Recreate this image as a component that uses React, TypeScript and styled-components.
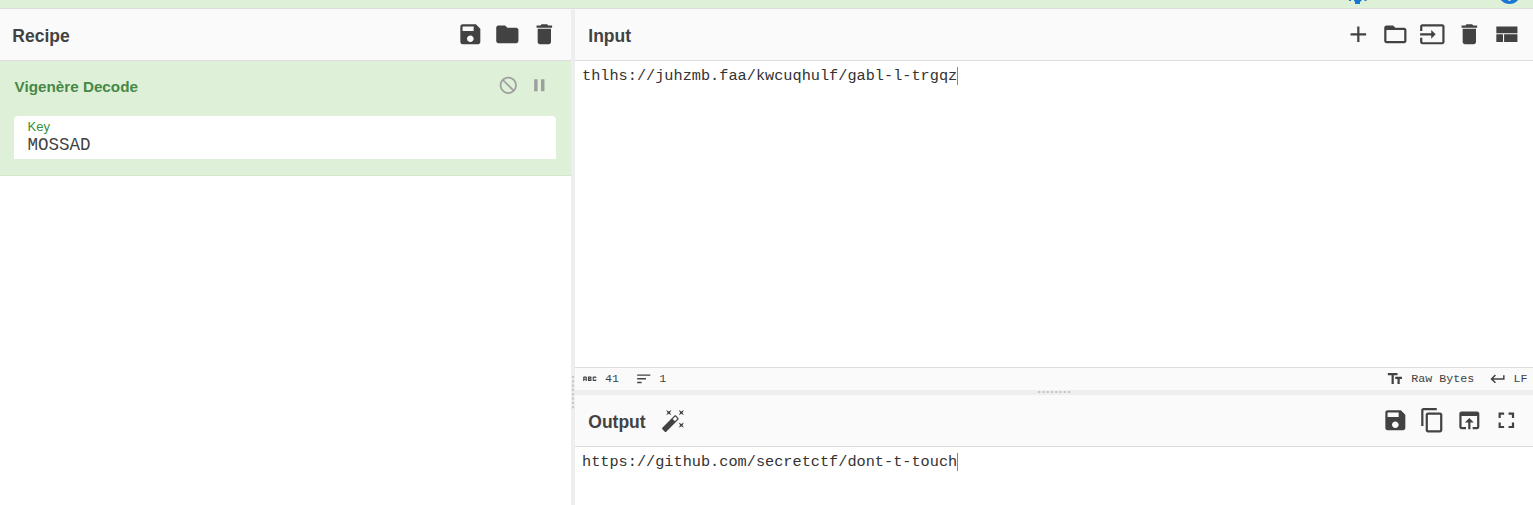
import React from "react";
import styled, { createGlobalStyle } from "styled-components";

const Global = createGlobalStyle`
  * { box-sizing: border-box; }
  html, body, #root { height: 100%; }
  body { margin: 0; overflow: hidden; background: #fff; color: #424242; font-family: "Liberation Sans", Arial, sans-serif; }
`;

const mono = `"Liberation Mono", "Courier New", monospace`;

const Page = styled.div`display: flex; flex-direction: column; height: 505px; overflow: hidden;`;
const Banner = styled.header`
  flex: none; height: 9px; padding: 0 10.5px 0 0; overflow: hidden;
  display: flex; justify-content: flex-end; gap: 124.5px;
  background: #dff0d8; border-bottom: 1px solid #dddddd;
`;
const BannerIcon = styled.svg`display: block; flex: none; width: 27px; height: 8px;`;
const Workspace = styled.main`flex: 1; display: flex; min-height: 0;`;
const RecipePane = styled.section`width: 571px; flex: none; display: flex; flex-direction: column;`;
const IoPane = styled.section`flex: 1; min-width: 0; display: flex; flex-direction: column;`;
const ColumnGutter = styled.div`
  width: 4px; flex: none; background: #eeeeee;
  display: flex; flex-direction: column; align-items: center; padding-top: 367px;
`;
const RowGutter = styled.div`
  height: 5px; flex: none; background: #eeeeee;
  display: flex; justify-content: center; align-items: flex-start; padding-top: 1px;
`;
const Grip = styled.svg`display: block; flex: none;`;
const TitleBar = styled.div`
  height: 52px; flex: none; display: flex; align-items: center;
  padding: 0 13px; background: #fafafa; border-bottom: 1px solid #dddddd;
`;
const RecipeTitleBar = styled(TitleBar)`padding: 0 13px 0 12px;`;
const Title = styled.h1`margin: 0; padding: 2px 0 0 0.3px; font-size: 17.5px; line-height: 22px; font-weight: 700;`;
const Tools = styled.div`margin-left: auto; display: flex; gap: 10.5px; padding-bottom: 1px;`;
const Wand = styled.div`margin-left: 15px; padding-bottom: 1px;`;
const Glyph = styled.svg<{ $size: number }>`
  display: block; flex: none; fill: currentColor;
  width: ${(p) => p.$size}px; height: ${(p) => p.$size}px;
`;
const Operation = styled.article`
  height: 115px; flex: none; padding: 14px 15px 0 14px;
  background: #dff0d8; border-bottom: 1px solid #d3e8c6; color: #468847;
`;
const OperationHead = styled.div`display: flex; align-items: center; height: 24px;`;
const OperationName = styled.h2`margin: 0; padding-left: 0.5px; font-size: 15.25px; font-weight: 700; line-height: 24px;`;
const OperationTools = styled.div`
  margin-left: auto; padding: 0 6.4px 3px 0; display: flex; gap: 10.2px; color: #9e9e9e;
`;
const Field = styled.label`
  display: block; margin-top: 17px; height: 43px; padding: 4px 13.5px 0;
  background: #fff; border-radius: 4px 4px 0 0;
`;
const FieldLabel = styled.span`display: block; font-size: 13px; line-height: 14px; color: #388e3c;`;
const FieldValue = styled.span`display: block; font: 17.5px/20px ${mono}; color: #424242; padding-top: 1px;`;
const Editor = styled.div<{ $height?: number }>`
  ${(p) => (p.$height ? `height: ${p.$height}px; flex: none;` : "flex: 1;")}
  display: flex; align-items: flex-start; padding: 6px 7px;
  font: 15.25px/18px ${mono}; color: #333;
`;
const Caret = styled.span`width: 1px; height: 18px; background: #888;`;
const StatusBar = styled.div`
  height: 23px; flex: none; display: flex; align-items: center; padding: 0 5.5px 0 6px;
  background: #fafafa; border-top: 1px solid #dddddd; font: 11.65px/20px ${mono};
`;
const Stat = styled.span<{ $gap?: number; $after?: number }>`
  display: flex; align-items: center; gap: ${(p) => p.$gap ?? 6}px; margin-right: ${(p) => p.$after ?? 0}px;
`;
const Spacer = styled.span`flex: 1;`;

const icons = {
  save: "M17 3H5c-1.11 0-2 .9-2 2v14c0 1.1.89 2 2 2h14c1.1 0 2-.9 2-2V7l-4-4zm-5 16c-1.66 0-3-1.34-3-3s1.34-3 3-3 3 1.34 3 3-1.34 3-3 3zm3-10H5V5h10v4z",
  folder: "M10 4H4c-1.1 0-1.99.9-1.99 2L2 18c0 1.1.9 2 2 2h16c1.1 0 2-.9 2-2V8c0-1.1-.9-2-2-2h-8l-2-2z",
  trash: "M6 19c0 1.1.9 2 2 2h8c1.1 0 2-.9 2-2V7H6v12zM19 4h-3.5l-1-1h-5l-1 1H5v2h14V4z",
  add: "M19 13h-6v6h-2v-6H5v-2h6V5h2v6h6v2z",
  folderOpen: "M20 6h-8l-2-2H4c-1.1 0-1.99.9-1.99 2L2 18c0 1.1.9 2 2 2h16c1.1 0 2-.9 2-2V8c0-1.1-.9-2-2-2zm0 12H4V8h16v10z",
  input: "M21 3.01H3c-1.1 0-2 .9-2 2V9h2V4.99h18v14.03H3V15H1v4.01c0 1.1.9 1.98 2 1.98h18c1.1 0 2-.88 2-1.98v-14c0-1.11-.9-2-2-2zM11 16l4-4-4-4v3H1v2h10v3z",
  layout: "M3 19h6v-7H3v7zm7 0h12v-7H10v7zM3 5v6h19V5H3z",
  block: "M12 2c5.52 0 10 4.48 10 10s-4.48 10-10 10S2 17.52 2 12 6.48 2 12 2zM20 12c0-4.42-3.58-8-8-8-1.85 0-3.55.63-4.9 1.69L18.31 16.9C19.37 15.55 20 13.85 20 12zm-8 8c1.85 0 3.55-.63 4.9-1.69L5.69 7.1C4.63 8.45 4 10.15 4 12c0 4.42 3.58 8 8 8z",
  pause: "M6 19h4V5H6v14zm8-14v14h4V5h-4z",
  abc: "M21 11h-1.5v-.5h-2v3h2V13H21v1c0 .55-.45 1-1 1h-3c-.55 0-1-.45-1-1v-4c0-.55.45-1 1-1h3c.55 0 1 .45 1 1v1zM8 10v5H6.5v-1.5h-2V15H3v-5c0-.55.45-1 1-1h3c.55 0 1 .45 1 1zm-1.5.5h-2V12h2v-1.5zm7 1.5c.55 0 1 .45 1 1v1c0 .55-.45 1-1 1h-4V9h4c.55 0 1 .45 1 1v1c0 .55-.45 1-1 1zM11 10.5v.75h2v-.75h-2zm2 2.25h-2v.75h2v-.75z",
  sort: "M3 18h6v-2H3v2zM3 6v2h18V6H3zm0 7h12v-2H3v2z",
  text: "M2.5 4v3h5v12h3V7h5V4h-13zm19 5h-9v3h3v7h3v-7h3V9z",
  enter: "M19 7v4H5.83l3.58-3.59L8 6l-6 6 6 6 1.41-1.41L5.83 13H21V7z",
  wand: "M7.5 5.6L5 7l1.4-2.5L5 2l2.5 1.4L10 2 8.6 4.5 10 7 7.5 5.6m12 9.8L22 14l-1.4 2.5L22 19l-2.5-1.4L17 19l1.4-2.5L17 14l2.5 1.4M22 2l-1.4 2.5L22 7l-2.5-1.4L17 7l1.4-2.5L17 2l2.5 1.4L22 2m-8.66 10.78l2.44-2.44-2.12-2.12-2.44 2.44 2.12 2.12m1.03-5.49l2.34 2.34c.39.37.39 1.02 0 1.41L5.04 22.71c-.39.39-1.04.39-1.41 0l-2.34-2.34c-.39-.37-.39-1.02 0-1.41L12.96 7.29c.39-.39 1.04-.39 1.41 0z",
  copy: "M16 1H4c-1.1 0-2 .9-2 2v14h2V3h12V1zm3 4H8c-1.1 0-2 .9-2 2v14c0 1.1.9 2 2 2h11c1.1 0 2-.9 2-2V7c0-1.1-.9-2-2-2zm0 16H8V7h11v14z",
  openInBrowser: "M19 4H5c-1.11 0-2 .9-2 2v12c0 1.1.89 2 2 2h4v-2H5V8h14v10h-4v2h4c1.1 0 2-.9 2-2V6c0-1.1-.89-2-2-2zm-7 6l-4 4h3v6h2v-6h3l-4-4z",
  fullscreen: "M7 14H5v5h5v-2H7v-3zm-2-4h2V7h3V5H5v5zm12 7h-3v2h5v-5h-2v3zM14 5v2h3v3h2V5h-5z",
};

function Icon({ name, size = 26.67 }: { name: keyof typeof icons; size?: number }) {
  return (
    <Glyph viewBox="0 0 24 24" $size={size} aria-hidden="true">
      <path d={icons[name]} />
    </Glyph>
  );
}

const dots = Array.from({ length: 8 }, (_, i) => i * 4.3);

export default function App() {
  return (
    <>
      <Global />
      <Page>
        <Banner>
          <BannerIcon viewBox="0 0 27 8" fill="#1976d2">
            <path d="M5 0h2v1H5zM10 0h7.5v1l-1.5.8V4h-5V1.800l-1-.8zM20.500 0h2v1h-2z" />
          </BannerIcon>
          <BannerIcon viewBox="0 0 27 8">
            <circle cx="13.5" cy="-7" r="11.100" fill="#1976d2" />
            <path d="M12.500 0h2v1h-2z" fill="#dff0d8" />
          </BannerIcon>
        </Banner>
        <Workspace>
          <RecipePane>
            <RecipeTitleBar>
              <Title>Recipe</Title>
              <Tools>
                <Icon name="save" />
                <Icon name="folder" />
                <Icon name="trash" />
              </Tools>
            </RecipeTitleBar>
            <Operation>
              <OperationHead>
                <OperationName>Vigenère Decode</OperationName>
                <OperationTools>
                  <Icon name="block" size={20.6} />
                  <Icon name="pause" size={20.6} />
                </OperationTools>
              </OperationHead>
              <Field>
                <FieldLabel>Key</FieldLabel>
                <FieldValue>MOSSAD</FieldValue>
              </Field>
            </Operation>
          </RecipePane>
          <ColumnGutter>
            <Grip width="2" height="33" fill="#c8c8c8">
              {dots.map((d) => <rect key={d} y={d} width="2" height="2.2" />)}
            </Grip>
          </ColumnGutter>
          <IoPane>
            <TitleBar>
              <Title>Input</Title>
              <Tools>
                <Icon name="add" />
                <Icon name="folderOpen" />
                <Icon name="input" />
                <Icon name="trash" />
                <Icon name="layout" />
              </Tools>
            </TitleBar>
            <Editor $height={306}>thlhs://juhzmb.faa/kwcuqhulf/gabl-l-trgqz<Caret /></Editor>
            <StatusBar>
              <Stat $gap={6.5} $after={16}><Icon name="abc" size={17.5} />41</Stat>
              <Stat $gap={6.8}><Icon name="sort" size={17.5} />1</Stat>
              <Spacer />
              <Stat $gap={7} $after={15}><Icon name="text" size={17.8} />Raw Bytes</Stat>
              <Stat $gap={6.6}><Icon name="enter" size={17.8} />LF</Stat>
            </StatusBar>
            <RowGutter>
              <Grip width="33" height="2" fill="#c8c8c8">
                {dots.map((d) => <rect key={d} x={d} width="2.2" height="2" />)}
              </Grip>
            </RowGutter>
            <TitleBar>
              <Title>Output</Title>
              <Wand><Icon name="wand" size={25} /></Wand>
              <Tools>
                <Icon name="save" />
                <Icon name="copy" />
                <Icon name="openInBrowser" />
                <Icon name="fullscreen" />
              </Tools>
            </TitleBar>
            <Editor>https://github.com/secretctf/dont-t-touch<Caret /></Editor>
          </IoPane>
        </Workspace>
      </Page>
    </>
  );
}
